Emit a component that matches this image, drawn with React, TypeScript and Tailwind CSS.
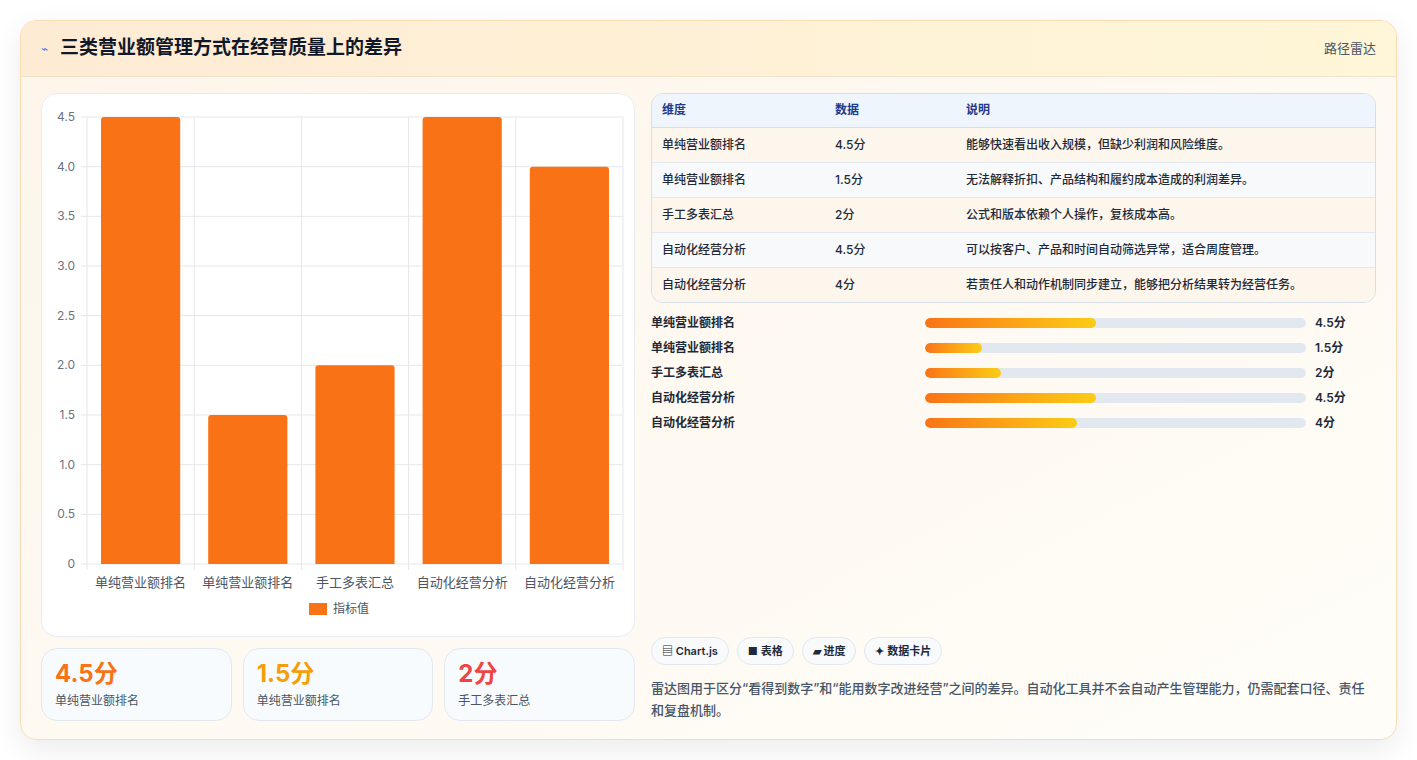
import React from 'react'

const rows = [
  { name: '单纯营业额排名', v: 4.5, note: '能够快速看出收入规模，但缺少利润和风险维度。' },
  { name: '单纯营业额排名', v: 1.5, note: '无法解释折扣、产品结构和履约成本造成的利润差异。' },
  { name: '手工多表汇总', v: 2, note: '公式和版本依赖个人操作，复核成本高。' },
  { name: '自动化经营分析', v: 4.5, note: '可以按客户、产品和时间自动筛选异常，适合周度管理。' },
  { name: '自动化经营分析', v: 4, note: '若责任人和动作机制同步建立，能够把分析结果转为经营任务。' },
]

const Chart = () => {
  const left = 45, top = 23, w = 536, h = 447
  const ticks = [0, 0.5, 1, 1.5, 2, 2.5, 3, 3.5, 4, 4.5]
  const y = (v: number) => top + h - (v / 4.5) * h
  const cw = w / 5
  return (
    <svg width="594" height="542" className="block" style={{ fontFamily: 'Inter, "Noto Sans CJK SC", sans-serif' }}>
      {ticks.map(t => (
        <g key={t}>
          <line x1={left - 6} x2={left + w} y1={y(t)} y2={y(t)} stroke="#e5e7eb" />
          <text x={left - 12} y={y(t) + 4} textAnchor="end" fontSize="12" fill="#6b7280">{t === 0 ? '0' : t.toFixed(1)}</text>
        </g>
      ))}
      {[0, 1, 2, 3, 4, 5].map(i => (
        <line key={i} x1={left + i * cw} x2={left + i * cw} y1={top} y2={top + h + 6} stroke="#e5e7eb" />
      ))}
      {rows.map((r, i) => (
        <g key={i}>
          <path
            d={`M${left + i * cw + 14} ${top + h} V${y(r.v) + 3} Q${left + i * cw + 14} ${y(r.v)} ${left + i * cw + 17} ${y(r.v)} H${left + i * cw + cw - 17} Q${left + i * cw + cw - 14} ${y(r.v)} ${left + i * cw + cw - 14} ${y(r.v) + 3} V${top + h} Z`}
            fill="#f97316"
          />
          <text x={left + i * cw + cw / 2} y={top + h + 23} textAnchor="middle" fontSize="13" fill="#4b5563">{r.name}</text>
        </g>
      ))}
      <rect x="267" y="509" width="18" height="12" fill="#f97316" />
      <text x="291" y="519" fontSize="12" fill="#4b5563">指标值</text>
    </svg>
  )
}

const App = () => {
  return (
    <div className="w-[1417px] h-[760px] bg-white p-5" style={{ fontFamily: 'Inter, "Noto Sans CJK SC", sans-serif' }}>
      <div className="h-[720px] rounded-2xl border border-[#f7dcb4] bg-gradient-to-br from-[#fdf5ea] to-[#fffdf8] shadow-[0_10px_30px_rgba(0,0,0,0.08)] overflow-hidden flex flex-col">
        <div className="h-[56px] flex items-center justify-between px-5 bg-gradient-to-r from-[#feebd4] to-[#fef6d8] border-b border-[#f3e3cc]">
          <div className="flex items-center gap-3">
            <span className="text-[#3b82f6] text-xs">⌁</span>
            <h1 className="text-[19px] font-bold text-[#111827]">三类营业额管理方式在经营质量上的差异</h1>
          </div>
          <span className="text-[13px] text-[#4b5563]">路径雷达</span>
        </div>
        <div className="flex-1 flex gap-4 px-5 pt-4 pb-[18px]">
          <div className="w-[594px] flex flex-col gap-[11px]">
            <div className="h-[544px] bg-white rounded-2xl border border-[#e8edf3]">
              <Chart />
            </div>
            <div className="flex gap-[11px]">
              {[
                { v: '4.5分', c: 'text-[#f97316]', l: '单纯营业额排名' },
                { v: '1.5分', c: 'text-[#f59e0b]', l: '单纯营业额排名' },
                { v: '2分', c: 'text-[#ef4444]', l: '手工多表汇总' },
              ].map((k, i) => (
                <div key={i} className="flex-1 h-[73px] rounded-2xl border border-[#e2e8f0] bg-[#f8fbfe] px-[13px] pt-[10px]">
                  <div className={`text-[24px] font-bold leading-[30px] ${k.c}`}>{k.v}</div>
                  <div className="text-[12px] text-[#4b5563] mt-[3px]">{k.l}</div>
                </div>
              ))}
            </div>
          </div>
          <div className="flex-1 flex flex-col">
            <div className="rounded-xl border border-[#d6dee8] overflow-hidden">
              <table className="w-full text-[12px] text-[#1f2937]">
                <thead>
                  <tr className="bg-[#eef5fd] text-[#1e3a8a] h-[33px] border-b border-[#d6dee8]">
                    <th className="text-left font-semibold pl-[10px] w-[183px]">维度</th>
                    <th className="text-left font-semibold w-[131px]">数据</th>
                    <th className="text-left font-semibold">说明</th>
                  </tr>
                </thead>
                <tbody>
                  {rows.map((r, i) => (
                    <tr key={i} className={`h-[35px] ${i < 4 ? 'border-b border-[#e2e8f0]' : ''} ${i % 2 === 0 ? 'bg-[#fdf6ec]' : 'bg-[#f7f9fb]'}`}>
                      <td className="pl-[10px] font-medium">{r.name}</td>
                      <td className="font-medium">{r.v}分</td>
                      <td className="font-medium">{r.note}</td>
                    </tr>
                  ))}
                </tbody>
              </table>
            </div>
            <div className="mt-[12px] flex flex-col gap-[9px]">
              {rows.map((r, i) => (
                <div key={i} className="flex items-center h-[16px] text-[12px] font-semibold text-[#1f2937]">
                  <span className="w-[274px]">{r.name}</span>
                  <div className="w-[381px] h-[10px] rounded-full bg-[#e2e8f0] overflow-hidden">
                    <div className="h-full rounded-full bg-gradient-to-r from-[#f97316] to-[#facc15]" style={{ width: `${r.v * 10}%` }} />
                  </div>
                  <span className="ml-[9px]">{r.v}分</span>
                </div>
              ))}
            </div>
            <div className="flex-1" />
            <div className="flex gap-2 text-[11px] font-semibold text-[#1f2937]">
              {['▤ Chart.js', '■ 表格', '▰ 进度', '✦ 数据卡片'].map(c => (
                <span key={c} className="h-[28px] px-[10px] flex items-center rounded-full border border-[#e2e8f0] bg-[#f8fafc]">{c}</span>
              ))}
            </div>
            <p className="mt-[12px] text-[13px] font-medium text-[#475569] leading-[22px]">
              雷达图用于区分“看得到数字”和“能用数字改进经营”之间的差异。自动化工具并不会自动产生管理能力，仍需配套口径、责任和复盘机制。
            </p>
          </div>
        </div>
      </div>
    </div>
  )
}

export default App
